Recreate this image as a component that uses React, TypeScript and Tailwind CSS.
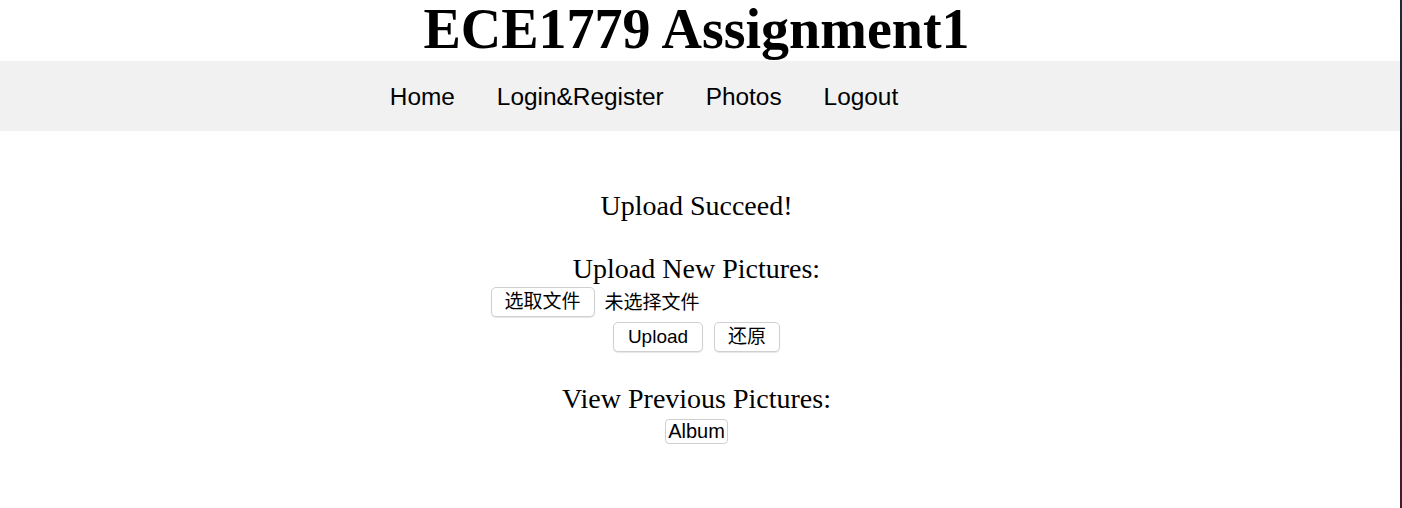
const serif = { fontFamily: '"Liberation Serif", "Times New Roman", serif' };

function Btn({ children, className = "" }: { children: React.ReactNode; className?: string }) {
  return (
    <button
      className={
        "h-[30px] px-[12px] bg-white border border-[#d0d0d0] rounded-[5px] shadow-[0_1px_1px_rgba(0,0,0,0.1)] text-[19px] leading-none text-black " +
        className
      }
      style={{ fontFamily: '"Liberation Sans", "Noto Sans CJK SC", sans-serif' }}
    >
      {children}
    </button>
  );
}

export default function App() {
  const sans = { fontFamily: '"Liberation Sans", Arial, sans-serif' };
  return (
    <div className="w-[1402px] h-[508px] flex bg-white overflow-hidden">
      <div className="w-[1400px] h-full flex flex-col">
        <div className="h-[61px] pr-[7px] text-center">
          <h1 className="text-[56px] font-bold leading-[59px] text-black" style={serif}>
            ECE1779 Assignment1
          </h1>
        </div>
        <nav className="h-[70px] bg-[#f1f1f1] flex items-center justify-center pt-[2px] pr-[112px]">
          <ul className="flex text-[24.4px] text-black" style={sans}>
            <li className="px-[21px]">Home</li>
            <li className="px-[21px]">Login&amp;Register</li>
            <li className="px-[21px]">Photos</li>
            <li className="px-[21px]">Logout</li>
          </ul>
        </nav>
        <main className="flex flex-col items-center pt-[59px] pr-[7px] text-black" style={serif}>
          <p className="text-[28px] leading-[32px]">Upload Succeed!</p>
          <p className="text-[28px] leading-[32px] mt-[31px]">Upload New Pictures:</p>
          <div className="w-[412px] flex items-center gap-[10px] mt-[1px]">
            <Btn className="px-[13px]">选取文件</Btn>
            <span
              className="text-[19px] pt-[3px]"
              style={{ fontFamily: '"Liberation Sans", "Noto Sans CJK SC", sans-serif' }}
            >
              未选择文件
            </span>
          </div>
          <div className="flex gap-[11px] mt-[4px]">
            <Btn className="px-[14px]">Upload</Btn>
            <Btn className="px-[13px]">还原</Btn>
          </div>
          <p className="text-[28px] leading-[32px] mt-[31px]">View Previous Pictures:</p>
          <button
            className="mt-[4px] h-[25px] px-[2px] bg-white border border-[#d0d0d0] rounded-[4px] text-[20px] leading-none text-black"
            style={sans}
          >
            Album
          </button>
        </main>
      </div>
      <div className="w-[2px] h-full bg-gradient-to-b from-[#1c2a3e] via-[#2a1620] to-[#4a1a28]" />
    </div>
  );
}
